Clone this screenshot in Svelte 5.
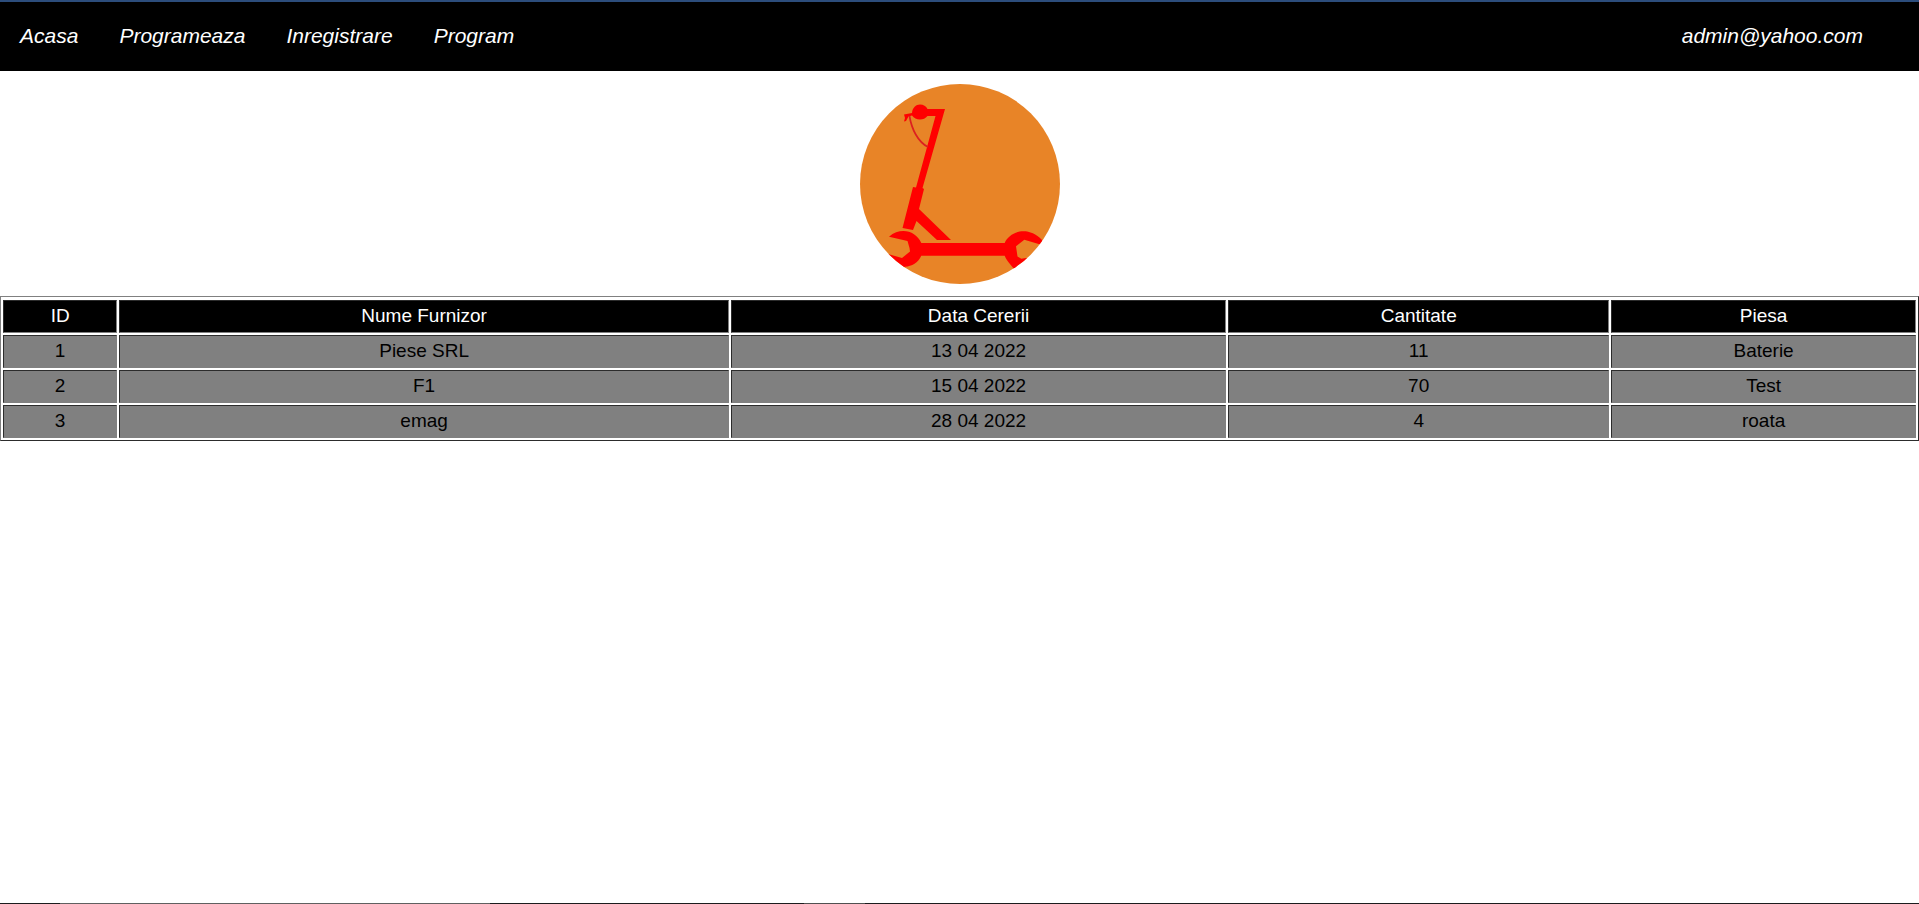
<script>
  const links = ['Acasa', 'Programeaza', 'Inregistrare', 'Program'];
  const columns = [
    { name: 'ID', width: 6 },
    { name: 'Nume Furnizor', width: 32 },
    { name: 'Data Cererii', width: 26 },
    { name: 'Cantitate', width: 20 },
    { name: 'Piesa', width: 16 }
  ];
  const rows = [
    ['1', 'Piese SRL', '13 04 2022', '11', 'Baterie'],
    ['2', 'F1', '15 04 2022', '70', 'Test'],
    ['3', 'emag', '28 04 2022', '4', 'roata']
  ];
</script>

<div class="page">
  <header>
    <nav>
      {#each links as link}
        <a href="#{link.toLowerCase()}">{link}</a>
      {/each}
    </nav>
    <a href="#cont">admin@yahoo.com</a>
  </header>

  <main>
    <svg class="logo" viewBox="0 0 200 200" role="img" aria-label="Trotineta">
      <defs>
        <clipPath id="disc"><circle cx="100" cy="100" r="100" /></clipPath>
      </defs>
      <circle cx="100" cy="100" r="100" fill="#e88427" />
      <g clip-path="url(#disc)" fill="#f00">
        <path d="M67.500 25H85L62.500 104L64 105L59 125L91 156H77L56.500 137L53 146L42.500 144L53 103L56 103.500L75.500 32H67.500C65.500 34.500 63 35.500 60 35.500C56.500 35.500 54 34 52 31.500L48.500 32.500L46 37L44 37.500L45 34L44 30.500L52 29C52.500 23.500 56 20.500 60 20.500C63.500 20.500 66 22 67.500 25Z" />
        <path d="M49.500 32C51.500 45 58 58 68 63" fill="none" stroke="#dc2020" stroke-width="1.700" />
        <path d="M29 152.700C41 142.500 56 147 61.300 159H144.700C149.500 147.500 168 141 182 156V161L164.300 155.700L156 162.300L157.500 172.500L161.300 174.700L166 174L182 178L158 190C152 181.500 147 178 144.700 171.700H61.300C58 179 52 182 45 182.700L36 186L28 170L42 174L50 167.500L49.500 164L47.500 157Z" />
      </g>
    </svg>

    <table>
      <colgroup>
        {#each columns as column}
          <col style="width: {column.width}%" />
        {/each}
      </colgroup>
      <thead>
        <tr>
          {#each columns as column}
            <th scope="col">{column.name}</th>
          {/each}
        </tr>
      </thead>
      <tbody>
        {#each rows as row}
          <tr>
            {#each row as cell}
              <td>{cell}</td>
            {/each}
          </tr>
        {/each}
      </tbody>
    </table>
  </main>
  <footer></footer>
</div>

<style>
  :global(body) {
    margin: 0;
    background: #fff;
  }

  .page {
    display: flex;
    flex-direction: column;
    min-height: 100vh;
    font-family: Arial, "Liberation Sans", sans-serif;
  }

  header {
    display: flex;
    align-items: center;
    justify-content: space-between;
    box-sizing: border-box;
    height: 71px;
    padding: 0 56px 2px 20px;
    border-top: 2px solid #2c4d7c;
    background: #000;
    font-size: 21px;
    font-style: italic;
  }

  nav {
    display: flex;
    gap: 41px;
  }

  header a {
    color: #fff;
    text-decoration: none;
  }

  main {
    flex: 1;
  }

  .logo {
    display: block;
    width: 200px;
    height: 200px;
    margin: 13px auto 12px;
  }

  table {
    width: 100%;
    padding-top: 1px;
    border: 1px outset gray;
    border-spacing: 2px;
    table-layout: fixed;
    font-size: 19px;
    line-height: 29px;
    text-align: center;
  }

  th,
  td {
    padding: 0 1px 2px;
    border: 1px inset gray;
  }

  th {
    background: #000;
    color: #fff;
    font-weight: normal;
  }

  td {
    background: gray;
    color: #000;
  }

  footer {
    height: 1px;
    background: linear-gradient(to right, #1c1c1e 60px, #606060 60px 490px, #1c1c1e 490px 804px, #505050 804px 865px, #1c1c1e 865px);
  }
</style>
